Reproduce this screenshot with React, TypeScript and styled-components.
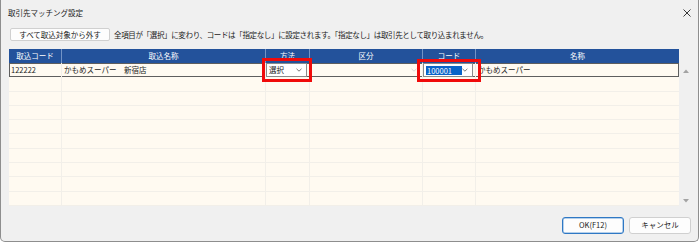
import React from "react";
import styled, { createGlobalStyle } from "styled-components";

const Global = createGlobalStyle`
  html, body { margin: 0; padding: 0; background: #ffffff; }
  body { font-family: "Noto Sans CJK JP", "Noto Sans", sans-serif; }
  * { box-sizing: border-box; }
`;

const COLS = [53, 204, 44, 113, 53, 203];
const colTemplate = COLS.map((c) => `${c}px`).join(" ");
const ROW_H = 14.3;

const Window = styled.div`
  width: 699px;
  height: 242px;
  background: #f0f0f0;
  border-left: 1px solid #8e8e8e;
  border-right: 1px solid #8e8e8e;
  border-bottom: 1px solid #8e8e8e;
  border-radius: 0 0 5px 5px;
  display: flex;
  flex-direction: column;
  font-size: 7.5px;
  color: #1a1a1a;
`;

const TitleBar = styled.div`
  height: 25px;
  display: flex;
  align-items: center;
  justify-content: space-between;
  padding: 1px 7px 0 7px;
`;

const Title = styled.span`
  font-size: 7.5px;
  line-height: 10px;
  color: #1a1a1a;
`;

const Body = styled.div`
  flex: 1;
  display: flex;
  flex-direction: column;
  padding: 3px 0 0 8px;
`;

const Toolbar = styled.div`
  display: flex;
  align-items: center;
  gap: 4px;
  height: 13px;
  padding-left: 1px;
`;

const Button = styled.button<{ $primary?: boolean }>`
  font-family: inherit;
  font-size: 7.5px;
  line-height: 10px;
  color: #1a1a1a;
  background: #fdfdfd;
  border: 1px solid ${(p) => (p.$primary ? "#2f78c4" : "#d0d0d0")};
  box-shadow: ${(p) => (p.$primary ? "inset 0 0 0 0.5px #6fa4da" : "none")};
  border-radius: 3px;
  padding: 0;
  display: flex;
  align-items: center;
  justify-content: center;
`;

const ToolButton = styled(Button)`
  width: 100px;
  height: 13px;
  border-radius: 2px;
`;

const Note = styled.span`
  font-size: 7.5px;
  letter-spacing: -0.35px;
  line-height: 10px;
  white-space: nowrap;
`;

const GridArea = styled.div`
  margin-top: 8px;
  display: flex;
  position: relative;
`;

const Grid = styled.div`
  width: 670px;
  display: flex;
  flex-direction: column;
  background: #fffaf1;
`;

const HeaderRow = styled.div`
  display: grid;
  grid-template-columns: ${colTemplate};
  height: 14px;
  background: #23529b;
`;

const HeaderCell = styled.div`
  color: #ffffff;
  font-size: 7.5px;
  line-height: 10px;
  display: flex;
  align-items: center;
  justify-content: center;
  border-right: 1px solid #7394c6;
  &:last-child { border-right: none; }
`;

const Row = styled.div<{ $selected?: boolean }>`
  display: grid;
  grid-template-columns: ${colTemplate};
  height: ${ROW_H}px;
  border-bottom: 1px solid #f2efe9;
  ${(p) => p.$selected && `outline: 1px solid #5e5e5e; outline-offset: -1px; border-bottom: none;`}
`;

const Cell = styled.div`
  border-right: 1px solid #f2efe9;
  display: flex;
  align-items: center;
  padding-left: 2px;
  font-size: 7.5px;
  line-height: 10px;
  white-space: nowrap;
  overflow: hidden;
  position: relative;
  &:last-child { border-right: none; }
`;

const Combo = styled.div`
  width: 100%;
  height: 100%;
  display: flex;
  align-items: center;
  justify-content: space-between;
  padding: 0 4px 0 2px;
  margin-left: -2px;
  background: #ffffff;
  border: 1px solid #8a8a8a;
`;

const FaintCombo = styled.div`
  width: 100%;
  height: 100%;
  display: flex;
  align-items: center;
  justify-content: flex-end;
  padding-right: 5px;
`;

const Selected = styled.span`
  background: #0a64c8;
  color: #ffffff;
  padding: 0 1px;
  width: 37px;
  line-height: 9px;
`;

const ScrollBar = styled.div`
  width: 13px;
  display: flex;
  flex-direction: column;
  justify-content: space-between;
  align-items: center;
  padding: 20px 0 3px 0;
`;

const Highlight = styled.div<{ $left: number; $top: number; $w: number; $h: number }>`
  position: absolute;
  left: ${(p) => p.$left}px;
  top: ${(p) => p.$top}px;
  width: ${(p) => p.$w}px;
  height: ${(p) => p.$h}px;
  border: 3px solid #f00a0a;
  pointer-events: none;
`;

const Footer = styled.div`
  display: flex;
  justify-content: flex-end;
  gap: 5px;
  padding: 11px 7px 0 0;
`;

const FooterButton = styled(Button)`
  width: 62px;
  height: 17px;
`;

const Chevron = ({ color = "#555" }: { color?: string }) => (
  <svg width="6" height="4" viewBox="0 0 6 4">
    <polyline points="0.5,0.8 3,3.2 5.5,0.8" fill="none" stroke={color} strokeWidth="0.8" />
  </svg>
);

const Close = () => (
  <svg width="8" height="8" viewBox="0 0 8 8">
    <line x1="0.5" y1="0.5" x2="7.5" y2="7.5" stroke="#222" strokeWidth="0.9" />
    <line x1="7.5" y1="0.5" x2="0.5" y2="7.5" stroke="#222" strokeWidth="0.9" />
  </svg>
);

const Arrow = ({ up }: { up?: boolean }) => (
  <svg width="6" height="4" viewBox="0 0 6 4">
    <polygon points={up ? "0,4 3,0.5 6,4" : "0,0 3,3.5 6,0"} fill="#a3a3a3" />
  </svg>
);

const headers = ["取込コード", "取込名称", "方法", "区分", "コード", "名称"];

export default function App() {
  const empty = Array.from({ length: 9 });
  return (
    <>
      <Global />
      <Window>
        <TitleBar>
          <Title>取引先マッチング設定</Title>
          <Close />
        </TitleBar>
        <Body>
          <Toolbar>
            <ToolButton>すべて取込対象から外す</ToolButton>
            <Note>
              全項目が「選択」に変わり、コードは「指定なし」に設定されます。「指定なし」は取引先として取り込まれません。
            </Note>
          </Toolbar>
          <GridArea>
            <Grid>
              <HeaderRow>
                {headers.map((h) => (
                  <HeaderCell key={h}>{h}</HeaderCell>
                ))}
              </HeaderRow>
              <Row $selected>
                <Cell>122222</Cell>
                <Cell>かもめスーパー　新宿店</Cell>
                <Cell>
                  <Combo>
                    <span>選択</span>
                    <Chevron />
                  </Combo>
                </Cell>
                <Cell>
                  <FaintCombo>
                    <Chevron color="#cfcfcf" />
                  </FaintCombo>
                </Cell>
                <Cell>
                  <Combo>
                    <Selected>100001</Selected>
                    <Chevron />
                  </Combo>
                </Cell>
                <Cell>かもめスーパー</Cell>
              </Row>
              {empty.map((_, i) => (
                <Row key={i}>
                  {COLS.map((_, j) => (
                    <Cell key={j} />
                  ))}
                </Row>
              ))}
            </Grid>
            <ScrollBar>
              <Arrow up />
              <Arrow />
            </ScrollBar>
            <Highlight $left={253} $top={9} $w={50} $h={24} />
            <Highlight $left={408} $top={10} $w={64} $h={23} />
          </GridArea>
          <Footer>
            <FooterButton $primary>OK(F12)</FooterButton>
            <FooterButton>キャンセル</FooterButton>
          </Footer>
        </Body>
      </Window>
    </>
  );
}
